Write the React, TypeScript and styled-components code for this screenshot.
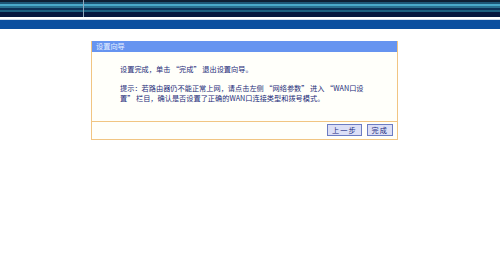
import styled, { createGlobalStyle } from "styled-components";

const GlobalStyle = createGlobalStyle`
  html, body {
    margin: 0;
    padding: 0;
    background: #ffffff;
  }
  body {
    font-family: "Noto Sans CJK SC", "Liberation Sans", sans-serif;
  }
`;

const Page = styled.div`
  width: 500px;
  height: 261px;
  overflow: hidden;
  background: #ffffff;
`;

const TopBar = styled.div`
  display: flex;
  height: 17px;
  background: linear-gradient(
    to bottom,
    #0f1f33 0px,
    #0f1f33 2px,
    #1d5575 2px,
    #1d5575 4px,
    #4aa8c8 4px,
    #4aa8c8 6px,
    #2a7090 6px,
    #2a7090 8px,
    #0d2f55 8px,
    #0d2f55 10px,
    #1c5f80 10px,
    #1c5f80 12px,
    #061840 12px,
    #061840 17px
  );
`;

const TopLeft = styled.div`
  width: 83px;
  border-right: 1px solid #8fa8bc;
`;

const WhiteLine = styled.div`
  height: 2px;
  background: #ffffff;
  border-bottom: 1px solid #cfdcee;
`;

const BlueBand = styled.div`
  height: 9px;
  background: #0b4f9f;
`;

const Content = styled.div`
  padding: 12px 0 0 91px;
`;

const Panel = styled.div`
  width: 305px;
  border: 1px solid #f1c582;
  border-top: none;
  background: #fffffa;
`;

const PanelHeader = styled.div`
  height: 11px;
  line-height: 11px;
  padding-left: 4px;
  background: #6694f0;
  color: #e6eeff;
  font-size: 7.2px;
`;

const PanelBody = styled.div`
  padding: 12px 0 17px 28px;
  color: #1b2a78;
  font-size: 7.2px;
`;

const Para = styled.p<{ $gap?: number }>`
  margin: ${(p) => p.$gap ?? 0}px 0 0;
  line-height: 10.5px;
`;

const Footer = styled.div`
  display: flex;
  justify-content: flex-end;
  align-items: center;
  gap: 5px;
  height: 17px;
  padding-right: 4px;
  border-top: 1px solid #f1c582;
`;

const Button = styled.button`
  height: 12px;
  padding: 0 4px;
  border: 1px solid #6c7cc2;
  background: #dcdff6;
  color: #1b2a80;
  font-family: "Noto Sans CJK SC", "Liberation Sans", sans-serif;
  font-size: 7.2px;
  line-height: 10px;
  letter-spacing: 1px;
  cursor: pointer;
`;

export default function App() {
  return (
    <Page>
      <GlobalStyle />
      <TopBar>
        <TopLeft />
      </TopBar>
      <WhiteLine />
      <BlueBand />
      <Content>
        <Panel>
          <PanelHeader>设置向导</PanelHeader>
          <PanelBody>
            <Para>设置完成，单击 “完成” 退出设置向导。</Para>
            <Para $gap={8}>
              提示：若路由器仍不能正常上网，请点击左侧 “网络参数” 进入 “WAN口设
              <br />
              置” 栏目，确认是否设置了正确的WAN口连接类型和拨号模式。
            </Para>
          </PanelBody>
          <Footer>
            <Button>上一步</Button>
            <Button>完成</Button>
          </Footer>
        </Panel>
      </Content>
    </Page>
  );
}
